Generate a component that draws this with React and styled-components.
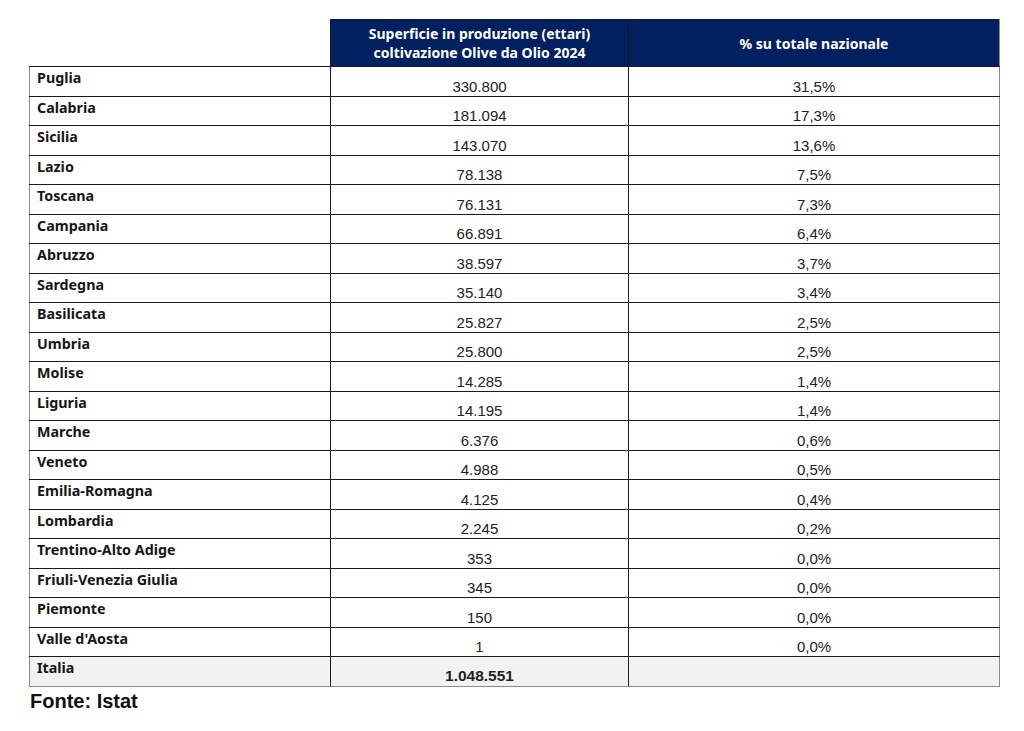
import React from 'react';
import styled, { createGlobalStyle } from 'styled-components';

const GlobalStyle = createGlobalStyle`
  html, body {
    margin: 0;
    padding: 0;
    background: #ffffff;
  }
`;

const Page = styled.div`
  padding: 19px 0 0 29px;
  width: 1024px;
  height: 731px;
  box-sizing: border-box;
  background: #fff;
`;

const Table = styled.table`
  border-collapse: collapse;
  table-layout: fixed;
  width: 970px;
`;

const HeadCell = styled.th`
  background: #002060;
  color: #fff;
  font-family: 'Noto Sans', 'Open Sans', sans-serif;
  font-weight: 700;
  font-size: 14px;
  line-height: 19px;
  height: 46px;
  padding: 0;
  text-align: center;
  vertical-align: middle;
  border: 1px solid #1a1a1a;
  border-right-color: ${(p) => (p.$last ? '#8a8a8a' : '#1a1a1a')};
`;

const BlankHead = styled.th`
  padding: 0;
  border-bottom: 1px solid #1a1a1a;
`;

const Row = styled.tr`
  background: ${(p) => (p.$total ? '#f2f2f2' : '#fff')};
  height: 29.5px;
`;

const Label = styled.td`
  font-family: 'Noto Sans', 'Open Sans', sans-serif;
  font-weight: 700;
  font-size: 14.3px;
  line-height: 17px;
  color: #161616;
  vertical-align: top;
  padding: 2px 0 0 7px;
  border: 1px solid #1a1a1a;
  border-left-color: #8a8a8a;
  ${(p) => p.$total && 'border-bottom-color: #8a8a8a;'}
`;

const Value = styled.td`
  font-family: 'Liberation Sans', Arial, sans-serif;
  font-weight: ${(p) => (p.$bold ? 700 : 400)};
  font-size: ${(p) => (p.$bold ? '15.5px' : '15px')};
  color: #222;
  text-align: center;
  vertical-align: bottom;
  padding: 0 0 1px;
  border: 1px solid #1a1a1a;
  ${(p) => p.$last && 'border-right-color: #8a8a8a;'}
  ${(p) => p.$total && 'border-bottom-color: #8a8a8a;'}
`;

const Source = styled.div`
  font-family: 'Liberation Sans', Arial, sans-serif;
  font-weight: 700;
  font-size: 20px;
  color: #111;
  margin-top: 3px;
  margin-left: 1px;
`;

const rows = [
  ['Puglia', '330.800', '31,5%'],
  ['Calabria', '181.094', '17,3%'],
  ['Sicilia', '143.070', '13,6%'],
  ['Lazio', '78.138', '7,5%'],
  ['Toscana', '76.131', '7,3%'],
  ['Campania', '66.891', '6,4%'],
  ['Abruzzo', '38.597', '3,7%'],
  ['Sardegna', '35.140', '3,4%'],
  ['Basilicata', '25.827', '2,5%'],
  ['Umbria', '25.800', '2,5%'],
  ['Molise', '14.285', '1,4%'],
  ['Liguria', '14.195', '1,4%'],
  ['Marche', '6.376', '0,6%'],
  ['Veneto', '4.988', '0,5%'],
  ['Emilia-Romagna', '4.125', '0,4%'],
  ['Lombardia', '2.245', '0,2%'],
  ['Trentino-Alto Adige', '353', '0,0%'],
  ['Friuli-Venezia Giulia', '345', '0,0%'],
  ['Piemonte', '150', '0,0%'],
  ["Valle d'Aosta", '1', '0,0%'],
];

const App = () => (
  <>
    <GlobalStyle />
    <Page>
      <Table>
        <colgroup>
          <col style={{ width: 301 }} />
          <col style={{ width: 298 }} />
          <col style={{ width: 371 }} />
        </colgroup>
        <thead>
          <tr>
            <BlankHead />
            <HeadCell>
              Superficie in produzione (ettari)
              <br />
              coltivazione Olive da Olio 2024
            </HeadCell>
            <HeadCell $last>% su totale nazionale</HeadCell>
          </tr>
        </thead>
        <tbody>
          {rows.map(([name, area, pct]) => (
            <Row key={name}>
              <Label>{name}</Label>
              <Value>{area}</Value>
              <Value $last>{pct}</Value>
            </Row>
          ))}
          <Row $total>
            <Label $total>Italia</Label>
            <Value $bold $total>
              1.048.551
            </Value>
            <Value $last $total />
          </Row>
        </tbody>
      </Table>
      <Source>Fonte: Istat</Source>
    </Page>
  </>
);

export default App;
